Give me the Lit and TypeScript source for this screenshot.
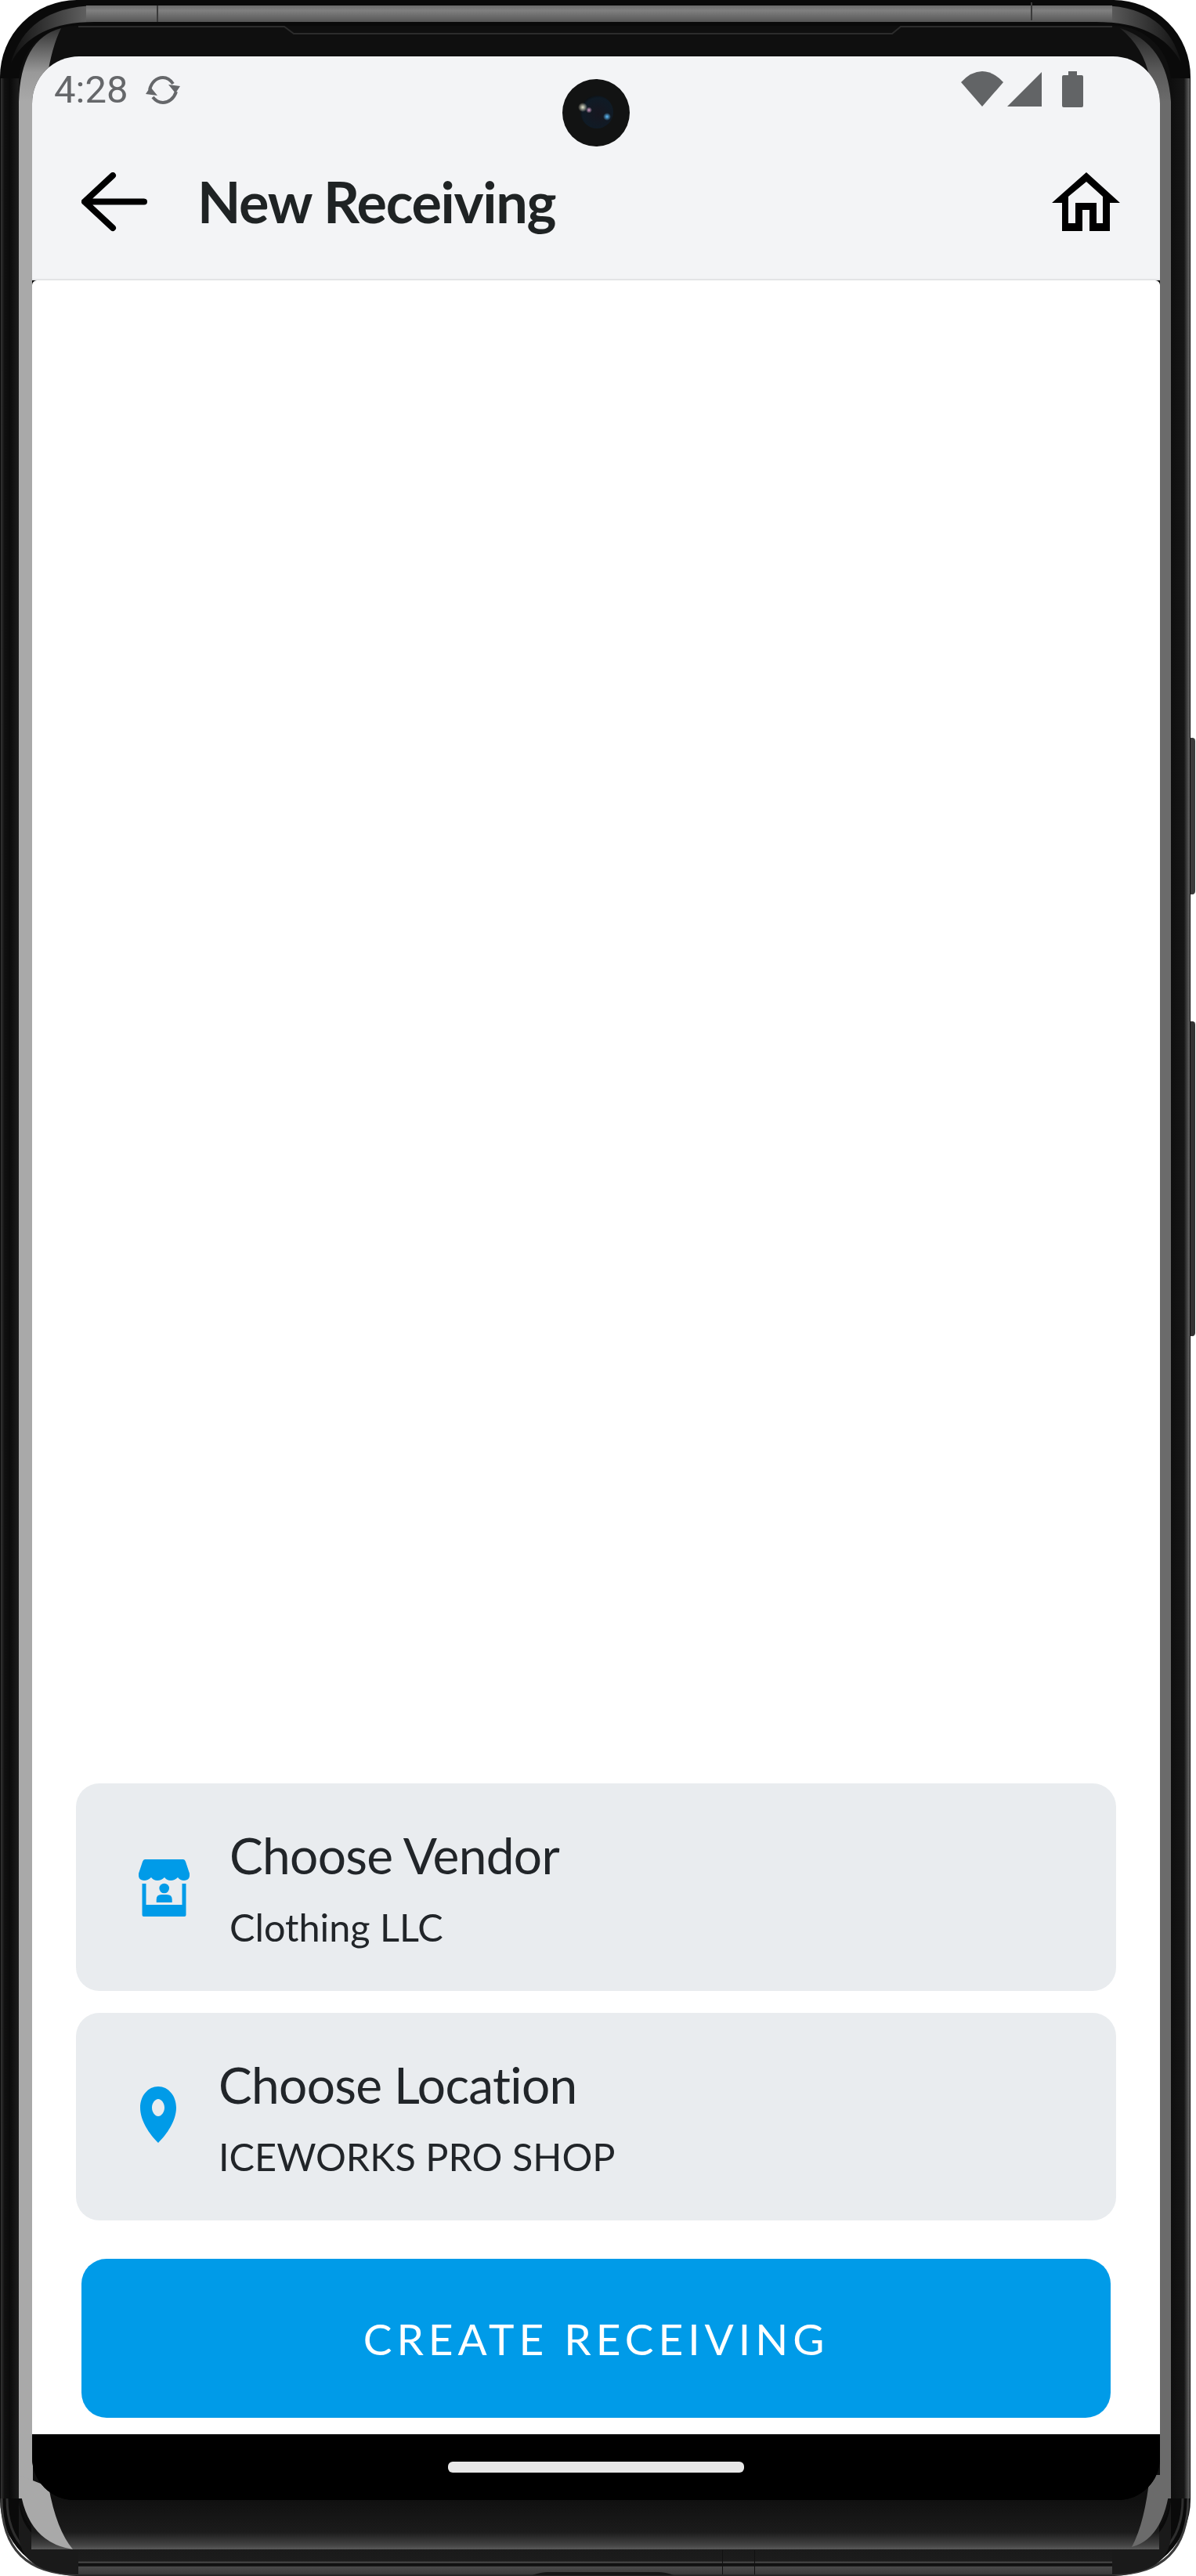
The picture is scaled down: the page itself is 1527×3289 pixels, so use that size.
import { LitElement, html, css, svg } from 'lit';
import { customElement } from 'lit/decorators.js';

const bezel = svg`
  <defs>
    <linearGradient id="topBand" x1="0" x2="0" y1="0" y2="1">
      <stop offset="0" stop-color="#6a6a6a"/><stop offset=".3" stop-color="#808080"/><stop offset="1" stop-color="#565656"/>
    </linearGradient>
    <linearGradient id="topEnds" x1="0" x2="1" y1="0" y2="0">
      <stop offset="0" stop-color="#111"/><stop offset=".07" stop-color="#666"/><stop offset=".93" stop-color="#666"/><stop offset="1" stop-color="#111"/>
    </linearGradient>
    <linearGradient id="bottomPanel" x1="0" x2="0" y1="0" y2="1">
      <stop offset="0" stop-color="#101010"/><stop offset=".65" stop-color="#1b1b1b"/><stop offset=".92" stop-color="#444"/><stop offset="1" stop-color="#5a5a5a"/>
    </linearGradient>
    <linearGradient id="leftCorner" x1="0" x2="0" y1="0" y2="1">
      <stop offset="0" stop-color="#333"/><stop offset=".6" stop-color="#999"/><stop offset="1" stop-color="#a9a9a9"/>
    </linearGradient>
    <linearGradient id="rightCorner" x1="0" x2="0" y1="0" y2="1">
      <stop offset="0" stop-color="#222"/><stop offset=".6" stop-color="#5c5c5c"/><stop offset="1" stop-color="#6b6b6b"/>
    </linearGradient>
    <linearGradient id="bottomEdge" x1="0" x2="0" y1="0" y2="1">
      <stop offset="0" stop-color="#1a1a1a"/><stop offset=".45" stop-color="#1c1c1c"/><stop offset=".5" stop-color="#4a4a4a"/>
      <stop offset=".56" stop-color="#111"/><stop offset=".64" stop-color="#111"/><stop offset=".68" stop-color="#4a4a4a"/><stop offset=".95" stop-color="#3a3a3a"/><stop offset="1" stop-color="#222"/>
    </linearGradient>
    <linearGradient id="sideLeft" x1="0" x2="1" y1="0" y2="0">
      <stop offset="0" stop-color="#333"/><stop offset=".2" stop-color="#111"/><stop offset=".5" stop-color="#0a0a0a"/><stop offset="1" stop-color="#1d1d1d"/>
    </linearGradient>
    <linearGradient id="sideRight" x1="0" x2="1" y1="0" y2="0">
      <stop offset="0" stop-color="#0e0e0e"/><stop offset=".7" stop-color="#161616"/><stop offset=".8" stop-color="#333"/><stop offset="1" stop-color="#666"/>
    </linearGradient>
  </defs>
  <rect x="1517" y="942" width="9" height="200" rx="4" fill="#3c3c3c"/>
  <rect x="1517" y="1304" width="9" height="402" rx="4" fill="#333"/>
  <rect x="0" y="0" width="1520" height="3289" rx="98" fill="#0a0a0a"/>
  <rect x="1" y="100" width="23" height="3090" fill="url(#sideLeft)"/>
  <rect x="1495" y="100" width="24" height="3090" fill="url(#sideRight)"/>
  <path d="M2 3190Q2 3287 100 3287H1420Q1517 3287 1517 3190" fill="none" stroke="#3a3a3a" stroke-width="3"/>
  <path d="M9 3190Q9 3275 100 3275H1420Q1510 3275 1510 3190" fill="none" stroke="#2e2e2e" stroke-width="3"/>
  <path d="M24 3190Q26 3250 95 3255H1430Q1492 3250 1495 3190V3240Q1490 3287 1420 3287H100Q30 3287 24 3240Z" fill="#1a1a1a"/>
  <rect x="100" y="3255" width="1320" height="33" fill="url(#bottomEdge)"/>
  <path d="M680 3288Q690 3284 700 3284H840Q850 3284 860 3288Z" fill="#151515"/>
  <rect x="922" y="3256" width="1" height="31" fill="#111"/>
  <rect x="963" y="3256" width="1" height="31" fill="#111"/>
  <path d="M14 80Q34 10 120 7H1410Q1490 10 1508 80Q1480 28 1400 28H120Q42 28 14 80Z" fill="url(#topEnds)"/>
  <rect x="110" y="7" width="1310" height="21" fill="url(#topBand)"/>
  <rect x="200" y="7" width="2" height="21" fill="#3a3a3a"/>
  <rect x="1316" y="3" width="2" height="23" fill="#3a3a3a"/>
  <rect x="24" y="33" width="1471" height="3222" rx="72" fill="#0f0f0f"/>
  <path d="M100 34H363L375 43H1139L1150 34H1420" fill="none" stroke="#2c2c2c" stroke-width="2"/>
  <rect x="40" y="3192" width="1440" height="63" fill="url(#bottomPanel)"/>
  <path d="M24 130Q26 50 78 36Q66 60 60 100L41 130Z" fill="url(#leftCorner)"/>
  <rect x="24" y="130" width="18" height="3060" fill="#a9a9a9"/>
  <path d="M24 3160Q28 3245 93 3255Q72 3230 62 3175Z" fill="#a9a9a9"/>
  <path d="M1495 130Q1490 55 1430 36Q1460 60 1468 100L1481 130Z" fill="url(#rightCorner)"/>
  <rect x="1481" y="130" width="14" height="3060" fill="#6b6b6b"/>
  <path d="M1495 3160Q1490 3240 1445 3252Q1462 3220 1468 3160Z" fill="#6b6b6b"/>
`;

@customElement('app-root')
export default class AppRoot extends LitElement {
  static override styles = css`
    :host {
      display: block;
      width: 1527px;
      height: 3289px;
      background: #fff;
      font-family: 'Lato', sans-serif;
      font-variant-ligatures: none;
    }
    .device {
      position: relative;
      box-sizing: border-box;
      width: 1527px;
      height: 3289px;
      padding: 72px 46px 97px 41px;
    }
    .bezel {
      position: absolute;
      left: 0;
      top: 0;
    }
    .camera {
      position: absolute;
      left: 718px;
      top: 101px;
    }
    .screen {
      position: relative;
      display: flex;
      flex-direction: column;
      height: 100%;
      overflow: hidden;
      border-radius: 60px 60px 54px 54px;
      background: #000;
    }
    .top {
      height: 286px;
      box-sizing: border-box;
      background: #f3f4f6;
      border-bottom: 2px solid #e3e4e6;
    }
    .status {
      display: flex;
      align-items: flex-start;
      justify-content: space-between;
      height: 148px;
      box-sizing: border-box;
      padding: 19px 98px 0 28px;
      color: #65676a;
    }
    .status-left {
      display: flex;
      align-items: center;
      gap: 22px;
    }
    .time {
      font-family: 'Roboto', sans-serif;
      font-size: 49px;
      line-height: 47px;
    }
    .status-right {
      display: flex;
      align-items: flex-start;
      gap: 5px;
    }
    .status-right .bat {
      margin-left: 20px;
    }
    .bar {
      display: flex;
      align-items: center;
      height: 76px;
      padding: 0 51px 0 63px;
    }
    .title {
      flex: 1;
      margin: -2px 0 0 64px;
      font-size: 72px;
      font-weight: 700;
      letter-spacing: -1.300px;
      line-height: 76px;
      color: #1f2324;
    }
    .body {
      flex: 1;
      display: flex;
      flex-direction: column;
      justify-content: flex-end;
      background: #fff;
      border-radius: 6px 6px 0 0;
    }
    .card {
      display: flex;
      align-items: center;
      height: 265px;
      margin: 0 56px 28px;
      background: #e9ecef;
      border-radius: 30px;
    }
    .vendor {
      padding-left: 80px;
      gap: 51px;
    }
    .vendor svg {
      margin-top: 2px;
    }
    .location {
      padding-left: 82px;
      gap: 54px;
    }
    .location svg {
      margin-top: -6px;
    }
    .card-title {
      font-size: 64px;
      letter-spacing: -0.700px;
      line-height: 76px;
      color: #212529;
    }
    .card-sub {
      margin-top: 24px;
      font-size: 48.600px;
      line-height: 58px;
      color: #212529;
    }
    .create {
      display: flex;
      align-items: center;
      justify-content: center;
      height: 203px;
      margin: 21px 63px 21px;
      border: 0;
      border-radius: 32px;
      background: #009be8;
      color: #fff;
      font-family: inherit;
      font-size: 55px;
      letter-spacing: 6px;
    }
    .nav {
      display: flex;
      align-items: center;
      justify-content: center;
      height: 84px;
      background: #000;
    }
    .pill {
      width: 378px;
      height: 14px;
      border-radius: 6px;
      background: #e8e8e8;
    }
    svg {
      display: block;
      flex: none;
    }
  `;

  override render() {
    return html`
      <div class="device">
        <svg class="bezel" width="1527" height="3289" viewBox="0 0 1527 3289">${bezel}</svg>
        <div class="screen">
          <div class="top">
            <div class="status">
              <div class="status-left">
                <span class="time">4:28</span>
                <svg width="46" height="36" viewBox="0 0 46 36">
                  <path d="M6 18C8 8 15 2 23 2 28 2 32 4 36 10M40 20C37 29 30 34 23 34 18 34 14 32 10 27" fill="none" stroke="#65676a" stroke-width="4"/>
                  <path d="M30 11 45 13 39 22ZM16 25 1 23 7 14Z" fill="#65676a"/>
                </svg>
              </div>
              <div class="status-right">
                <svg width="54" height="45" viewBox="0 0 54 45"><path d="M0 14Q13 0 27 0T54 14L27 45Z" fill="#626466"/></svg>
                <svg width="45" height="45" viewBox="0 0 45 45"><path d="M44 1V45H0Z" fill="#626466"/></svg>
                <svg class="bat" width="27" height="46" viewBox="0 0 27 46"><path d="M8 0H19V5H25Q27 5 27 7V44Q27 46 25 46H2Q0 46 0 44V7Q0 5 2 5H8Z" fill="#626466"/></svg>
              </div>
            </div>
            <div class="bar">
              <svg width="84" height="76" viewBox="0 0 84 76">
                <path d="M80 37.500H4M40 4 4 37.500 40 71" fill="none" stroke="#000" stroke-width="8" stroke-linecap="round" stroke-linejoin="round"/>
              </svg>
              <div class="title">New Receiving</div>
              <svg width="87" height="76" viewBox="0 0 87 76">
                <path fill-rule="evenodd" fill="#000" d="M44 0 87 39H74V75H48V48H39V75H13V39H0ZM44 12 21 31V65H30V39H57V65H65V31Z"/>
              </svg>
            </div>
          </div>
          <div class="body">
            <div class="card vendor">
              <svg width="65" height="73" viewBox="0 0 65 73">
                <path d="M8 0H57Q59 0 60 3L65 18Q66 27 58 27 53 27 50 23 46 27 41 27 36 27 33 23 29 27 24 27 19 27 16 23 12 27 7 27-1 27 0 18L5 3Q6 0 8 0Z" fill="#009be8"/>
                <path d="M4.500 31H9.500V58H55.500V31H60.500V71Q60.500 73 58.500 73H6.500Q4.500 73 4.500 71Z" fill="#009be8"/>
                <circle cx="32.700" cy="37" r="6.300" fill="#009be8"/>
                <path d="M22.700 55V51Q22.700 45 29 45H36Q42.700 45 42.700 51V55Z" fill="#009be8"/>
              </svg>
              <div>
                <div class="card-title">Choose Vendor</div>
                <div class="card-sub">Clothing LLC</div>
              </div>
            </div>
            <div class="card location">
              <svg width="46" height="72" viewBox="0 0 46 72">
                <path fill-rule="evenodd" d="M23 0C36 0 46 12 46 27 46 44 34 61 23 72 12 61 0 44 0 27 0 12 10 0 23 0ZM23 16C19 16 15 21 15 27 15 33 19 38 23 38 27 38 31 33 31 27 31 21 27 16 23 16Z" fill="#009be8"/>
              </svg>
              <div>
                <div class="card-title">Choose Location</div>
                <div class="card-sub">ICEWORKS PRO SHOP</div>
              </div>
            </div>
            <button class="create">CREATE RECEIVING</button>
          </div>
          <div class="nav"><div class="pill"></div></div>
        </div>
        <svg class="camera" width="86" height="86" viewBox="0 0 86 86">
          <defs>
            <radialGradient id="lens" cx=".55" cy=".55" r=".6">
              <stop offset="0" stop-color="#17161f"/><stop offset=".8" stop-color="#0f1b26"/><stop offset="1" stop-color="#0c0d0e"/>
            </radialGradient>
            <radialGradient id="glowWhite"><stop offset="0" stop-color="#e8e8d0"/><stop offset="1" stop-color="#e8e8d0" stop-opacity="0"/></radialGradient>
            <radialGradient id="glowPink"><stop offset="0" stop-color="#d8a0c8"/><stop offset="1" stop-color="#d8a0c8" stop-opacity="0"/></radialGradient>
            <radialGradient id="glowBlue"><stop offset="0" stop-color="#60c0ff"/><stop offset="1" stop-color="#60c0ff" stop-opacity="0"/></radialGradient>
          </defs>
          <circle cx="43" cy="43" r="43" fill="#121313"/>
          <circle cx="44" cy="42" r="21" fill="url(#lens)"/>
          <circle cx="26" cy="36" r="6" fill="url(#glowWhite)"/>
          <circle cx="34" cy="39.500" r="4" fill="url(#glowPink)"/>
          <circle cx="57" cy="48" r="5" fill="url(#glowBlue)"/>
        </svg>
      </div>
    `;
  }
}
